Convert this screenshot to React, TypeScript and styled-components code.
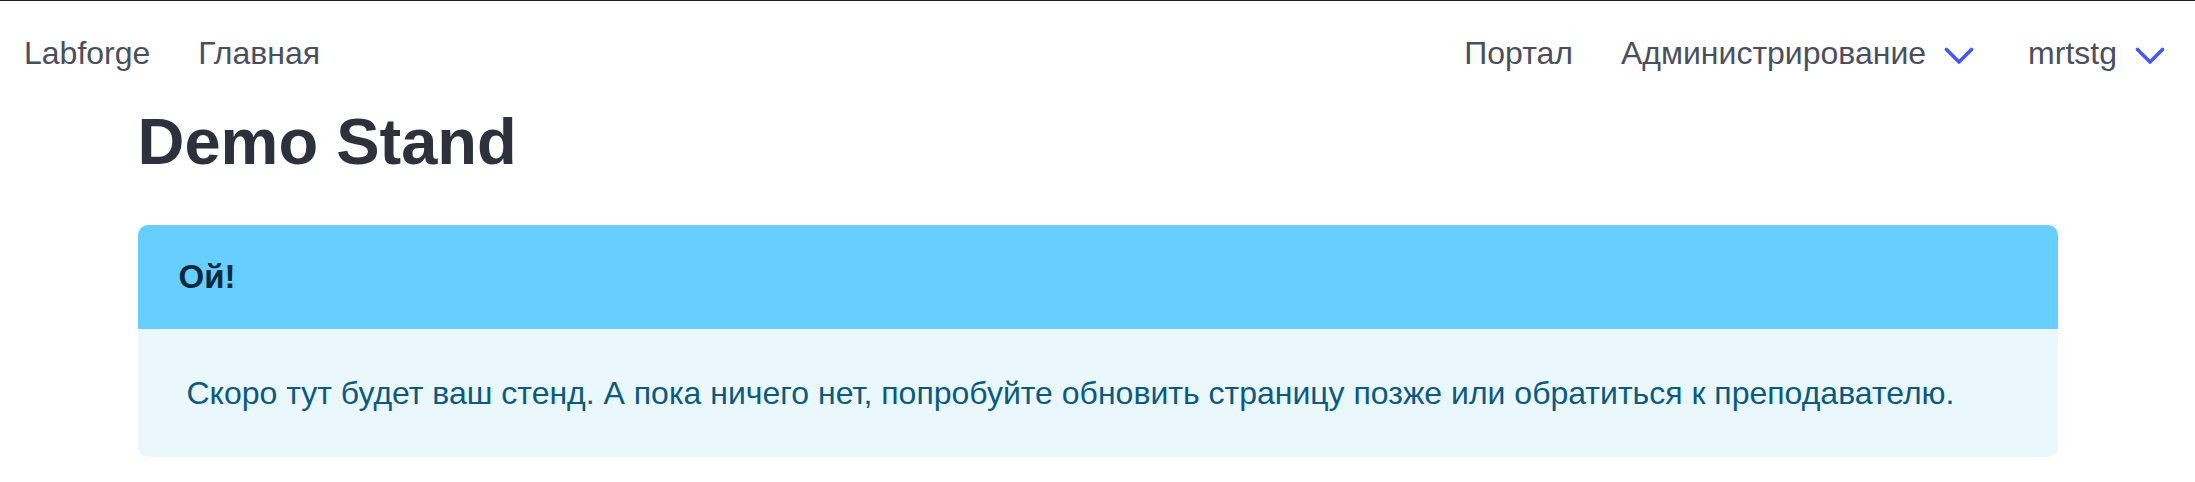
import React from "react";
import styled, { createGlobalStyle } from "styled-components";

const GlobalStyle = createGlobalStyle`
  * {
    box-sizing: border-box;
  }
  body {
    margin: 0;
    background: #ffffff;
    font-family: "Liberation Sans", Arial, sans-serif;
    border-top: 1px solid #1f2128;
  }
`;

function Chevron() {
  return (
    <ChevronIcon width="30" height="18" viewBox="0 0 30 18" aria-hidden="true">
      <polyline
        points="2.5,2.5 15,15 27.5,2.5"
        fill="none"
        stroke="#4757f7"
        strokeWidth="3.6"
        strokeLinecap="round"
        strokeLinejoin="round"
      />
    </ChevronIcon>
  );
}

function App() {
  return (
    <>
      <GlobalStyle />
      <Navbar>
        <NavGroup>
          <NavLink>Labforge</NavLink>
          <NavLink>Главная</NavLink>
        </NavGroup>
        <NavGroup>
          <NavLink>Портал</NavLink>
          <NavLink>
            Администрирование
            <Chevron />
          </NavLink>
          <NavLink>
            mrtstg
            <Chevron />
          </NavLink>
        </NavGroup>
      </Navbar>
      <Container>
        <Title>Demo Stand</Title>
        <Alert>
          <AlertHeader>Ой!</AlertHeader>
          <AlertBody>
            Скоро тут будет ваш стенд. А пока ничего нет, попробуйте обновить
            страницу позже или обратиться к преподавателю.
          </AlertBody>
        </Alert>
      </Container>
    </>
  );
}

export default App;

const Navbar = styled.nav`
  display: flex;
  justify-content: space-between;
  align-items: center;
  padding: 33px 24px 0 24px;
`;

const NavGroup = styled.div`
  display: flex;
  align-items: center;
  column-gap: 48px;
`;

const NavLink = styled.a`
  display: flex;
  align-items: center;
  column-gap: 18px;
  font-size: 32px;
  line-height: 1.2;
  color: #4a4f5d;
  cursor: pointer;
  white-space: nowrap;
`;

const ChevronIcon = styled.svg`
  display: block;
  margin-top: 5px;
  margin-right: 6px;
`;

const Container = styled.main`
  max-width: 1920px;
  margin: 0 auto;
  padding-top: 31px;
`;

const Title = styled.h1`
  margin: 0 0 45px;
  font-size: 65px;
  line-height: 77px;
  font-weight: 700;
  color: #2c313c;
`;

const Alert = styled.section`
  border-radius: 10px;
  overflow: hidden;
  background: #eaf7fd;
`;

const AlertHeader = styled.h4`
  margin: 0;
  height: 104px;
  display: flex;
  align-items: center;
  padding: 0 41px;
  background: #66cfff;
  font-size: 33px;
  font-weight: 700;
  color: #052a3b;
`;

const AlertBody = styled.p`
  margin: 0;
  height: 128px;
  display: flex;
  align-items: center;
  padding: 0 49px;
  font-size: 32px;
  color: #0a5a80;
`;
